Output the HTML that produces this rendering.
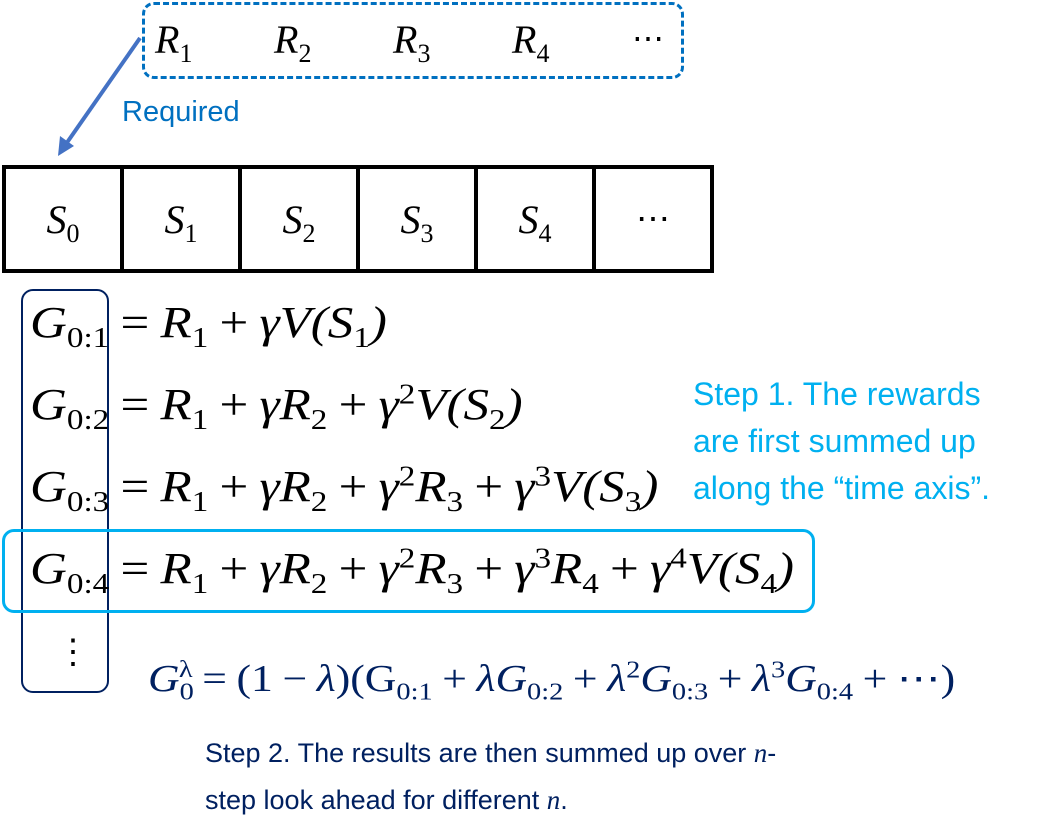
<!DOCTYPE html>
<html><head><meta charset="utf-8"><style>
body{margin:0;width:1057px;height:840px;background:#fff;position:relative;overflow:hidden;font-family:"Liberation Serif",serif}
.a{position:absolute;white-space:nowrap;line-height:1}
.m{font-style:italic}
sub,sup{font-size:65%;font-style:normal;line-height:0}
.o{font-style:normal;margin:0 .22em}
.ss{font-family:"Liberation Sans",sans-serif}
.eq{transform:scaleX(1.16);transform-origin:0 0}
.cell{position:absolute;top:165px;height:100px;width:114px;border:4px solid #000;box-sizing:content-box;font-size:40px;font-style:italic;display:flex;align-items:center;justify-content:center}
</style></head><body>
<div style="position:absolute;left:142px;top:2px;width:536px;height:71px;border:3px dashed #0070c0;border-radius:12px"></div>
<div class="a m" style="left:155px;top:20px;font-size:40px">R<sub>1</sub></div>
<div class="a m" style="left:274px;top:20px;font-size:40px">R<sub>2</sub></div>
<div class="a m" style="left:393px;top:20px;font-size:40px">R<sub>3</sub></div>
<div class="a m" style="left:512px;top:20px;font-size:40px">R<sub>4</sub></div>
<div class="a" style="left:632px;top:22px;font-size:32px">⋯</div>
<svg style="position:absolute;left:0;top:0" width="200" height="170"><line x1="140" y1="38" x2="66" y2="144" stroke="#4472c4" stroke-width="4"/><polygon points="58,156 60,136 74,146" fill="#4472c4"/></svg>
<div class="a ss" style="left:122px;top:98px;font-size:29px;color:#0070c0">Required</div>
<div class="cell" style="left:2px"><span>S<sub>0</sub></span></div>
<div class="cell" style="left:120px"><span>S<sub>1</sub></span></div>
<div class="cell" style="left:238px"><span>S<sub>2</sub></span></div>
<div class="cell" style="left:356px"><span>S<sub>3</sub></span></div>
<div class="cell" style="left:474px"><span>S<sub>4</sub></span></div>
<div class="cell" style="left:592px;font-style:normal;font-size:34px">⋯</div>
<div style="position:absolute;left:21px;top:289px;width:84px;height:400px;border:2.5px solid #002060;border-radius:12px"></div>
<div style="position:absolute;left:2px;top:529px;width:807px;height:78px;border:3px solid #00b0f0;border-radius:12px"></div>
<div class="a m eq" style="left:30px;top:301px;font-size:44px">G<sub>0:1</sub><span class="o">=</span>R<sub>1</sub><span class="o">+</span>γV(S<sub>1</sub>)</div>
<div class="a m eq" style="left:30px;top:383px;font-size:44px">G<sub>0:2</sub><span class="o">=</span>R<sub>1</sub><span class="o">+</span>γR<sub>2</sub><span class="o">+</span>γ<sup>2</sup>V(S<sub>2</sub>)</div>
<div class="a m eq" style="left:30px;top:465px;font-size:44px">G<sub>0:3</sub><span class="o">=</span>R<sub>1</sub><span class="o">+</span>γR<sub>2</sub><span class="o">+</span>γ<sup>2</sup>R<sub>3</sub><span class="o">+</span>γ<sup>3</sup>V(S<sub>3</sub>)</div>
<div class="a m eq" style="left:30px;top:547px;font-size:44px">G<sub>0:4</sub><span class="o">=</span>R<sub>1</sub><span class="o">+</span>γR<sub>2</sub><span class="o">+</span>γ<sup>2</sup>R<sub>3</sub><span class="o">+</span>γ<sup>3</sup>R<sub>4</sub><span class="o">+</span>γ<sup>4</sup>V(S<sub>4</sub>)</div>
<div class="a" style="left:56px;top:636px;font-size:34px">⋮</div>
<div class="a ss" style="left:693px;top:371px;font-size:32px;color:#00b0f0;line-height:47px">Step 1. The rewards<br>are first summed up<br>along the “time axis”.</div>
<div class="a m" style="left:148px;top:660px;font-size:38px;color:#002060;transform:scaleX(1.15);transform-origin:0 0">G<sub>0</sub><sup style="margin-left:-13px">λ</sup><span class="o">=</span><span style="font-style:normal">(1</span><span class="o">−</span>λ<span style="font-style:normal">)(G<sub>0:1</sub></span><span class="o">+</span>λG<sub>0:2</sub><span class="o">+</span>λ<sup>2</sup>G<sub>0:3</sub><span class="o">+</span>λ<sup>3</sup>G<sub>0:4</sub><span class="o">+</span><span style="font-style:normal">⋯)</span></div>
<div class="a ss" style="left:205px;top:730px;font-size:27px;color:#002060;line-height:47px">Step 2. The results are then summed up over <i style="font-family:'Liberation Serif',serif">n</i>-<br>step look ahead for different <i style="font-family:'Liberation Serif',serif">n</i>.</div>
</body></html>
